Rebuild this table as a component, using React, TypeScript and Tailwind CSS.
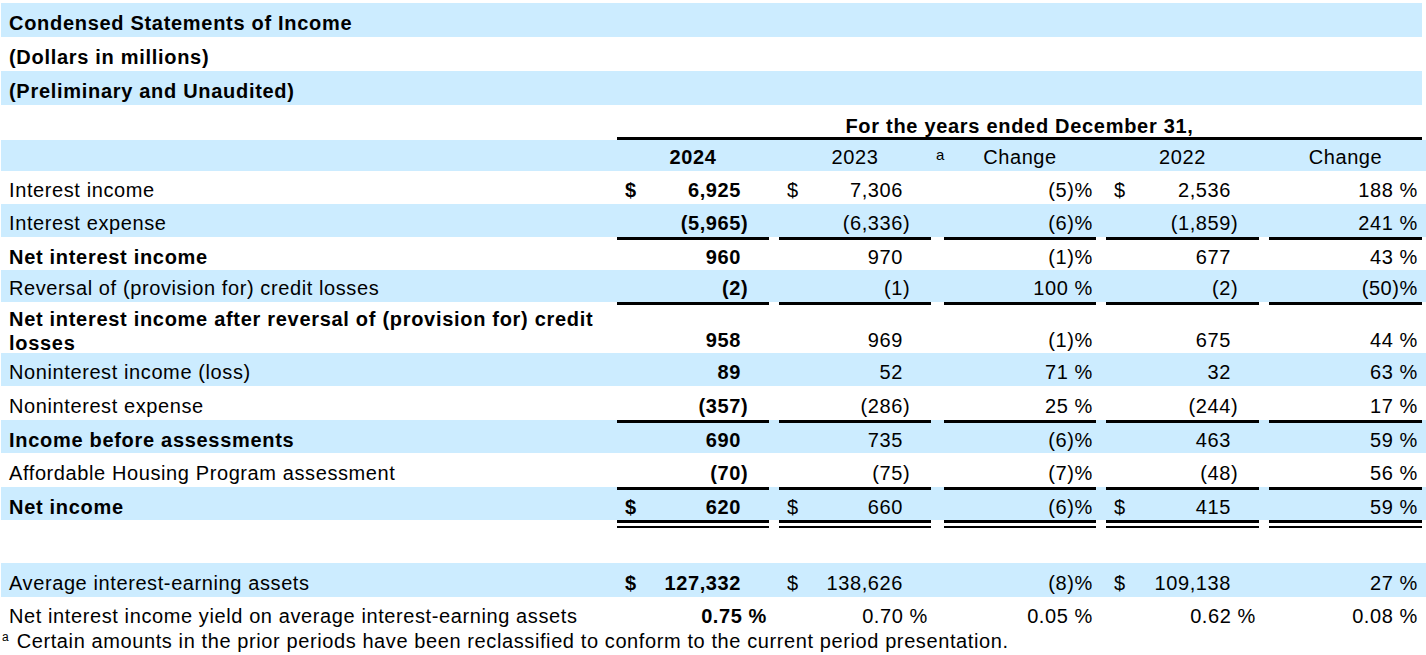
import React from "react";

type Money = { d?: boolean; v: string; n?: boolean };
type Line = {
  label: string;
  bold?: boolean;
  blue?: boolean;
  h: string;
  rule?: boolean;
  c: [Money, Money, string, Money, string];
};

const GRID =
  "grid grid-cols-[616px_152px_10px_152px_13px_152px_10px_153px_10px_153px]";

const lines: Line[] = [
  {
    label: "Interest income",
    h: "h-[33px]",
    c: [{ d: true, v: "6,925" }, { d: true, v: "7,306" }, "(5)%", { d: true, v: "2,536" }, "188 %"],
  },
  {
    label: "Interest expense",
    blue: true,
    h: "h-[33px]",
    c: [{ v: "5,965", n: true }, { v: "6,336", n: true }, "(6)%", { v: "1,859", n: true }, "241 %"],
  },
  {
    label: "Net interest income",
    bold: true,
    rule: true,
    h: "h-[33px]",
    c: [{ v: "960" }, { v: "970" }, "(1)%", { v: "677" }, "43 %"],
  },
  {
    label: "Reversal of (provision for) credit losses",
    blue: true,
    h: "h-[32px]",
    c: [{ v: "2", n: true }, { v: "1", n: true }, "100 %", { v: "2", n: true }, "(50)%"],
  },
  {
    label: "Net interest income after reversal of (provision for) credit|losses",
    bold: true,
    rule: true,
    h: "h-[51px]",
    c: [{ v: "958" }, { v: "969" }, "(1)%", { v: "675" }, "44 %"],
  },
  {
    label: "Noninterest income (loss)",
    blue: true,
    h: "h-[33px]",
    c: [{ v: "89" }, { v: "52" }, "71 %", { v: "32" }, "63 %"],
  },
  {
    label: "Noninterest expense",
    h: "h-[34px]",
    c: [{ v: "357", n: true }, { v: "286", n: true }, "25 %", { v: "244", n: true }, "17 %"],
  },
  {
    label: "Income before assessments",
    bold: true,
    blue: true,
    rule: true,
    h: "h-[33px]",
    c: [{ v: "690" }, { v: "735" }, "(6)%", { v: "463" }, "59 %"],
  },
  {
    label: "Affordable Housing Program assessment",
    h: "h-[34px]",
    c: [{ v: "70", n: true }, { v: "75", n: true }, "(7)%", { v: "48", n: true }, "56 %"],
  },
  {
    label: "Net income",
    bold: true,
    blue: true,
    rule: true,
    h: "h-[33px]",
    c: [{ d: true, v: "620" }, { d: true, v: "660" }, "(6)%", { d: true, v: "415" }, "59 %"],
  },
];

function MoneyCell({ m, bold, rule, pb }: { m: Money; bold?: boolean; rule?: boolean; pb: string }) {
  return (
    <div
      className={`flex items-end justify-between ${pb} ${rule ? "border-t-[3px] border-black" : ""} ${
        bold ? "font-bold" : ""
      }`}
    >
      <span className="pl-[8px]">{m.d ? "$" : ""}</span>
      <span className="flex">
        <span>
          {m.n ? "(" : ""}
          {m.v}
        </span>
        <span className="w-[28px]">{m.n ? ")" : ""}</span>
      </span>
    </div>
  );
}

function PctCell({
  s,
  rule,
  pr = "pr-[3px]",
  pb = "pb-[2px]",
  bold,
}: {
  s: string;
  rule?: boolean;
  pr?: string;
  pb?: string;
  bold?: boolean;
}) {
  return (
    <div
      className={`flex items-end justify-end ${pb} ${pr} ${rule ? "border-t-[3px] border-black" : ""} ${
        bold ? "font-bold" : ""
      }`}
    >
      {s}
    </div>
  );
}

function DataRow({ line }: { line: Line }) {
  const parts = line.label.split("|");
  const pb = line.rule ? "pb-[1px]" : "pb-[2px]";
  return (
    <div className={`${GRID} ${line.h} ${line.blue ? "bg-[#ccecff]" : "bg-white"}`}>
      <div
        className={`flex items-end pl-[8px] ${parts.length > 1 ? "" : pb} ${
          line.bold ? "font-bold tracking-[0.7px]" : ""
        }`}
      >
        {parts.length > 1 ? (
          <div className="-mb-[2px]">
            {parts[0]}
            <br />
            {parts[1]}
          </div>
        ) : (
          <span>{line.label}</span>
        )}
      </div>
      <MoneyCell m={line.c[0]} bold rule={line.rule} pb={pb} />
      <div />
      <MoneyCell m={line.c[1]} rule={line.rule} pb={pb} />
      <div />
      <PctCell s={line.c[2]} rule={line.rule} pb={pb} />
      <div />
      <MoneyCell m={line.c[3]} rule={line.rule} pb={pb} />
      <div />
      <PctCell s={line.c[4]} rule={line.rule} pb={pb} pr="pr-[4px]" />
    </div>
  );
}

function DoubleRule() {
  return (
    <div>
      <div className="h-[3px] bg-black" />
      <div className="mt-[3px] h-[2px] bg-black" />
    </div>
  );
}

export default function App() {
  return (
    <div className="w-[1426px] min-h-[655px] bg-white pl-[1px] pt-[3px] font-['Liberation_Sans',Arial,sans-serif] text-[20px] leading-[24px] tracking-[0.6px] text-black">
      {/* Title block */}
      <div className="w-[1421px] h-[34px] bg-[#ccecff] flex items-end pl-[8px] pb-[2px] font-bold tracking-[0.7px]">
        Condensed Statements of Income
      </div>
      <div className="w-[1421px] h-[34px] bg-white flex items-end pl-[8px] pb-[2px] font-bold tracking-[0.7px]">
        (Dollars in millions)
      </div>
      <div className="w-[1421px] h-[34px] bg-[#ccecff] flex items-end pl-[8px] pb-[2px] font-bold tracking-[0.7px]">
        (Preliminary and Unaudited)
      </div>

      {/* Period header */}
      <div className="grid grid-cols-[616px_805px] h-[35px]">
        <div />
        <div className="flex items-end justify-center border-b-[3px] border-black font-bold tracking-[0.7px]">
          <span className="-mb-[1px]">For the years ended December 31,</span>
        </div>
      </div>
      <div className={`${GRID} h-[31px] bg-[#ccecff]`}>
        <div />
        <div className="flex items-end justify-center pb-[2px] font-bold">2024</div>
        <div />
        <div className="flex items-end justify-center pb-[2px]">2023</div>
        <div className="flex items-end pl-[5px] pb-[9px] text-[15px] leading-none tracking-normal">a</div>
        <div className="flex items-end justify-center pb-[2px]">Change</div>
        <div />
        <div className="flex items-end justify-center pb-[2px]">2022</div>
        <div />
        <div className="flex items-end justify-center pb-[2px]">Change</div>
      </div>

      {lines.map((line) => (
        <DataRow key={line.label} line={line} />
      ))}

      {/* Double underline under net income */}
      <div className={`${GRID} h-[43px] bg-white`}>
        <div />
        <DoubleRule />
        <div />
        <DoubleRule />
        <div />
        <DoubleRule />
        <div />
        <DoubleRule />
        <div />
        <DoubleRule />
      </div>

      <DataRow
        line={{
          label: "Average interest-earning assets",
          blue: true,
          h: "h-[34px]",
          c: [{ d: true, v: "127,332" }, { d: true, v: "138,626" }, "(8)%", { d: true, v: "109,138" }, "27 %"],
        }}
      />

      <div className={`${GRID} h-[33px] bg-white`}>
        <div className="flex items-end pl-[8px] pb-[2px]">
          Net interest income yield on average interest-earning assets
        </div>
        <PctCell s="0.75 %" pr="pr-[2px]" bold />
        <div />
        <PctCell s="0.70 %" />
        <div />
        <PctCell s="0.05 %" />
        <div />
        <PctCell s="0.62 %" />
        <div />
        <PctCell s="0.08 %" pr="pr-[4px]" />
      </div>

      {/* Footnote */}
      <div className="flex items-end h-[25px] pb-[2px] pl-[1px]">
        <span className="text-[12px] leading-none tracking-normal mb-[10px]">a</span>
        <span className="ml-[8px]">
          Certain amounts in the prior periods have been reclassified to conform to the current period presentation.
        </span>
      </div>
    </div>
  );
}
